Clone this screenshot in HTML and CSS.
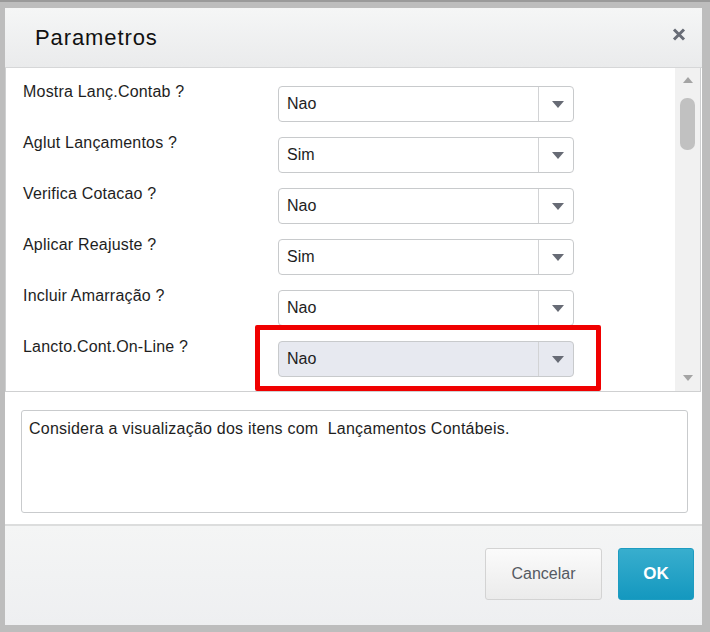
FILE: index.html
```html
<!DOCTYPE html>
<html lang="pt">
<head>
  <meta charset="UTF-8" />
  <title>Parametros</title>
  <link rel="stylesheet" href="styles.css">
</head>
<body>

  <div class="dialog">
    <div class="dialog-header">
      <h1>Parametros</h1>
      <svg class="close" width="14" height="13" viewBox="0 0 14 13">
        <path d="M2 1.5 L12 11.5 M12 1.5 L2 11.5" stroke="#686c76" stroke-width="3" fill="none"/>
      </svg>
    </div>

    <div class="params">
      <div class="param-list">
        <div class="param-row">
          <label>Mostra Lanç.Contab ?</label>
          <div class="combo"><span>Nao</span><i></i></div>
        </div>
        <div class="param-row">
          <label>Aglut Lançamentos ?</label>
          <div class="combo"><span>Sim</span><i></i></div>
        </div>
        <div class="param-row">
          <label>Verifica Cotacao ?</label>
          <div class="combo"><span>Nao</span><i></i></div>
        </div>
        <div class="param-row">
          <label>Aplicar Reajuste ?</label>
          <div class="combo"><span>Sim</span><i></i></div>
        </div>
        <div class="param-row">
          <label>Incluir Amarração ?</label>
          <div class="combo"><span>Nao</span><i></i></div>
        </div>
        <div class="param-row">
          <label>Lancto.Cont.On-Line ?</label>
          <div class="combo active"><span>Nao</span><i></i></div>
        </div>
        <div class="highlight"></div>
      </div>
      <div class="scrollbar">
        <b class="arrow up"></b>
        <div class="thumb"></div>
        <b class="arrow down"></b>
      </div>
    </div>

    <div class="help">
      <div class="help-box">Considera a visualização dos itens com&nbsp; Lançamentos Contábeis.</div>
    </div>

    <div class="dialog-footer">
      <button class="btn btn-cancel">Cancelar</button>
      <button class="btn btn-ok">OK</button>
    </div>
  </div>

</body>
</html>
```

FILE: styles.css
```css
* { box-sizing: border-box; margin: 0; padding: 0; }

body {
  background: #bdbdbd;
  border-top: 2px solid #9a9a9a;
  font-family: "Liberation Sans", Arial, sans-serif;
  color: #1e1e1e;
  padding: 6px 8px 0 5px;
  height: 632px;
  overflow: hidden;
}

.dialog {
  width: 697px;
  height: 617px;
  background: #fff;
  display: flex;
  flex-direction: column;
}

/* header */
.dialog-header {
  height: 60px;
  background: linear-gradient(#f5f6f6, #eaebec);
  border-bottom: 1px solid #d6d7d8;
  display: flex;
  align-items: center;
  justify-content: space-between;
  padding: 0 16px 0 30px;
}
.dialog-header h1 {
  font-size: 22px;
  font-weight: normal;
  letter-spacing: 0.9px;
  color: #111;
}
.close { margin-top: -6px; }

/* parameter list */
.params {
  height: 324px;
  width: 696px;
  display: flex;
  border: 1px solid #cfd0d1;
  border-top: none;
}
.param-list {
  flex: 1;
  position: relative;
  overflow: hidden;
  padding: 14px 0 0 17px;
}
.param-row {
  height: 51px;
  display: flex;
  align-items: flex-start;
}
.param-row label {
  width: 255px;
  font-size: 16px;
  letter-spacing: 0.2px;
  line-height: 19px;
}
.combo {
  margin-top: 4px;
  width: 296px;
  height: 36px;
  border: 1px solid #c8cacc;
  border-radius: 4px;
  background: #fff;
  display: flex;
  align-items: center;
  font-size: 16px;
}
.combo span {
  flex: 1;
  padding-left: 8px;
}
.combo i {
  width: 35px;
  height: 100%;
  border-left: 1px solid #d2d3d5;
  position: relative;
}
.combo i::after {
  content: "";
  position: absolute;
  left: 13px;
  top: 14px;
  border-left: 6px solid transparent;
  border-right: 6px solid transparent;
  border-top: 7px solid #676b75;
}
.combo.active { background: #e7e9f0; }

.highlight {
  position: absolute;
  left: 249px;
  top: 257px;
  width: 346px;
  height: 66px;
  border: 5px solid #f00000;
  border-radius: 2px;
}

/* scrollbar */
.scrollbar {
  width: 25px;
  background: #f1f1f1;
  display: flex;
  flex-direction: column;
  align-items: center;
  padding: 9px 0 10px;
}
.arrow {
  width: 0;
  height: 0;
  border-left: 5px solid transparent;
  border-right: 5px solid transparent;
  margin-left: 1px;
}
.arrow.up { border-bottom: 6px solid #a4a4a4; }
.arrow.down { border-top: 6px solid #a4a4a4; margin-top: auto; }
.thumb {
  margin-top: 15px;
  margin-left: -1px;
  width: 15px;
  height: 52px;
  border-radius: 7px;
  background: #c1c1c1;
}

/* description */
.help {
  padding: 18px 14px 11px 16px;
}
.help-box {
  height: 103px;
  border: 1px solid #c9cbcd;
  border-radius: 3px;
  padding: 8px 7px;
  font-size: 16px;
  letter-spacing: 0.22px;
  line-height: 19px;
}

/* footer */
.dialog-footer {
  flex: 1;
  border-top: 2px solid #dcdddd;
  background: linear-gradient(#f4f5f5, #eeeff1);
  display: flex;
  justify-content: flex-end;
  align-items: flex-start;
  gap: 16px;
  padding: 22px 8px 0 0;
}
.btn {
  height: 52px;
  border-radius: 3px;
  font-family: "Liberation Sans", Arial, sans-serif;
  cursor: pointer;
}
.btn-cancel {
  width: 117px;
  background: linear-gradient(#fbfbfb, #ebebeb);
  border: 1px solid #d3d3d3;
  color: #555a62;
  font-size: 16px;
}
.btn-ok {
  width: 76px;
  background: linear-gradient(#38aece, #1498bf);
  border: 1px solid #1d9cc1;
  color: #fff;
  font-size: 17px;
  font-weight: bold;
}
```
